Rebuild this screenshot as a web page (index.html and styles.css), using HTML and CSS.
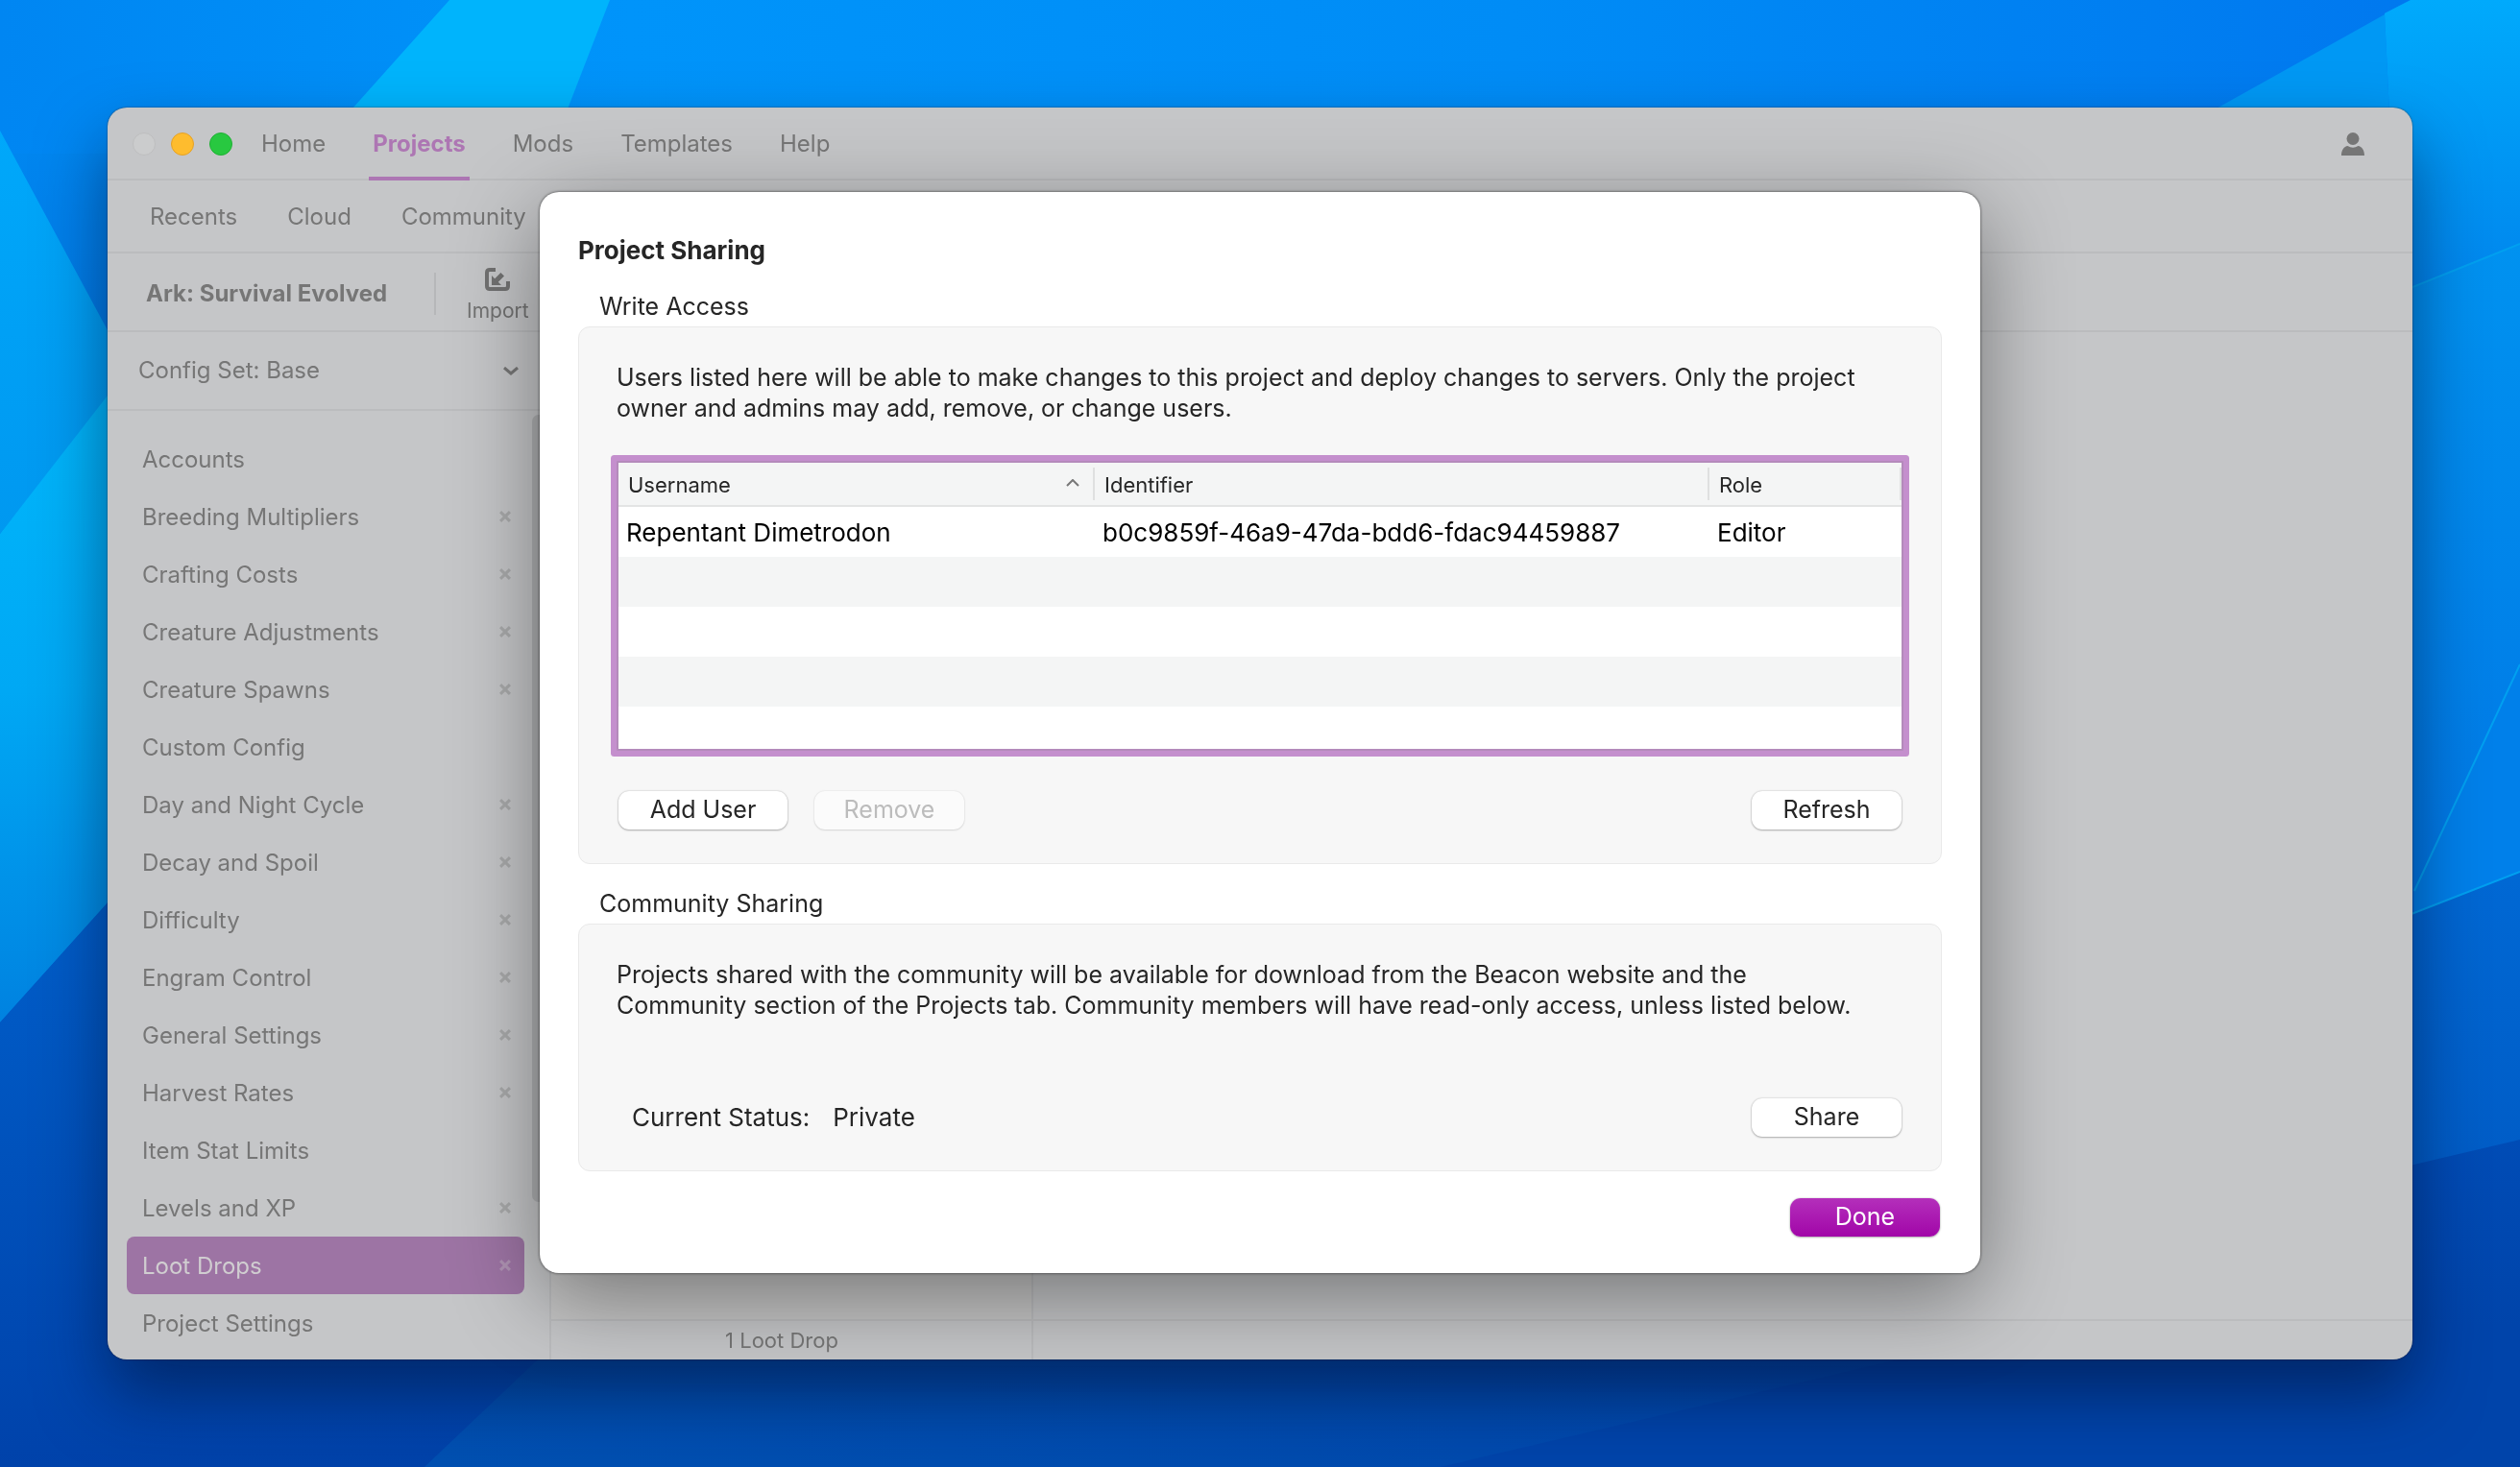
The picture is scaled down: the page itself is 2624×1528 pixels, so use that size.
FILE: index.html
```html
<!DOCTYPE html>
<html lang="en">
<head>
<meta charset="utf-8">
<title>Beacon</title>
<link rel="stylesheet" href="styles.css">
</head>
<body>
<svg class="wallpaper" viewBox="0 0 2624 1528" preserveAspectRatio="none" aria-hidden="true">
  <defs>
    <linearGradient id="sky" x1="0" y1="0" x2="0" y2="1"><stop offset="0" stop-color="#0090f8"/><stop offset=".25" stop-color="#0078e4"/><stop offset=".6" stop-color="#0068d4"/><stop offset=".8" stop-color="#005cc6"/><stop offset="1" stop-color="#0040a8"/></linearGradient>
    <linearGradient id="top" x1="0" y1="0" x2="1" y2="0"><stop offset="0" stop-color="#0086f2"/><stop offset=".25" stop-color="#0094fa"/><stop offset=".6" stop-color="#008cf6"/><stop offset="1" stop-color="#0076ee"/></linearGradient>
    <linearGradient id="cyan" x1="0" y1="0" x2="0" y2="1"><stop offset="0" stop-color="#00b8fc"/><stop offset=".5" stop-color="#00a8f4"/><stop offset="1" stop-color="#0082e0"/></linearGradient>
    <linearGradient id="left" x1="0" y1="0" x2="0" y2="1"><stop offset="0" stop-color="#00a8fa"/><stop offset="1" stop-color="#0098f0"/></linearGradient>
    <linearGradient id="deep" x1="0" y1="0" x2="0" y2="1"><stop offset="0" stop-color="#0060cc"/><stop offset="1" stop-color="#0042aa"/></linearGradient>
    <linearGradient id="right" x1="0" y1="0" x2="0" y2="1"><stop offset="0" stop-color="#00aafc"/><stop offset="1" stop-color="#0084ec"/></linearGradient>
    <linearGradient id="mid" x1="0" y1="0" x2="0" y2="1"><stop offset="0" stop-color="#0092f0"/><stop offset="1" stop-color="#0076e4"/></linearGradient>
    <linearGradient id="floor" x1="0" y1="0" x2="1" y2="0"><stop offset="0" stop-color="#0050b2"/><stop offset="1" stop-color="#0044aa"/></linearGradient>
    <linearGradient id="corner" x1="0" y1="0" x2="0" y2="1"><stop offset="0" stop-color="#004cb6"/><stop offset="1" stop-color="#0044aa"/></linearGradient>
  </defs>
  <rect width="2624" height="1528" fill="url(#sky)"/>
  <rect width="2624" height="160" fill="url(#top)"/>
  <polygon points="468,0 635,0 573,160 325,160" fill="#00b4fc"/>
  <polygon points="0,136 140,396 140,380 0,556" fill="url(#left)"/>
  <polygon points="0,556 140,376 140,909 0,1065" fill="url(#cyan)"/>
  <polygon points="0,1065 140,909 140,1380 600,1380 442,1528 0,1528" fill="url(#deep)"/>
  <polygon points="598,1380 442,1528 2624,1528 2624,1380" fill="url(#floor)"/>
  <polygon points="2624,1187 2480,1221 2480,1382 2624,1382" fill="url(#corner)"/>
  <polygon points="2130,1380 1500,1528 2624,1528 2624,1380" fill="#0044aa"/>
  <polygon points="2510,0 2224,160 2490,160 2483,14" fill="#0098f4"/>
  <polygon points="2510,0 2624,0 2624,254 2480,312 2490,160 2483,14" fill="url(#right)"/>
  <polygon points="2624,254 2480,312 2480,964 2624,908" fill="url(#mid)"/>
  <polygon points="2624,692 2514,928 2514,950 2624,908" fill="#0080ea"/>
  <path d="M2624 254L2480 312M2624 692L2514 928M2624 908L2480 964" fill="none" stroke="#00a0f0" stroke-width="2"/>
</svg>

<main class="desktop">
  <div class="window">
    <header class="titlebar">
      <div class="lights"><i class="light"></i><i class="light light-min"></i><i class="light light-max"></i></div>
      <nav class="tabs">
        <a href="#home">Home</a><a href="#projects" class="active">Projects</a><a href="#mods">Mods</a><a href="#templates">Templates</a><a href="#help">Help</a>
      </nav>
      <button class="account" aria-label="Account"><svg width="24" height="24" viewBox="0 0 24 24"><circle cx="12" cy="6.5" r="6.5"/><path d="M0 24C0 18 3 14.500 6.500 14Q12 17.500 17.500 14C21 14.500 24 18 24 24Z"/></svg></button>
    </header>
    <nav class="subtabs">
      <a href="#recents">Recents</a><a href="#cloud">Cloud</a><a href="#community">Community</a>
    </nav>
    <div class="toolbar">
      <h1>Ark: Survival Evolved</h1>
      <button class="import"><svg width="26" height="24" viewBox="0 0 26 24"><path d="M11 2H5Q2 2 2 5V19Q2 22 5 22H21Q24 22 24 19V14" fill="none" stroke="currentColor" stroke-width="4"/><path d="M7 8V18H17L13.800 14.800L20 8.600L16.400 5L10.200 11.200Z" fill="currentColor"/></svg><span>Import</span></button>
    </div>
    <div class="workspace">
      <aside class="sidebar">
        <button class="config"><span>Config Set: Base</span><svg width="16" height="9" viewBox="0 0 16 9"><path d="M1 1L8 7L15 1" fill="none" stroke="currentColor" stroke-width="3"/></svg></button>
        <ul class="editors">
          <li>Accounts</li>
          <li class="closable">Breeding Multipliers</li>
          <li class="closable">Crafting Costs</li>
          <li class="closable">Creature Adjustments</li>
          <li class="closable">Creature Spawns</li>
          <li>Custom Config</li>
          <li class="closable">Day and Night Cycle</li>
          <li class="closable">Decay and Spoil</li>
          <li class="closable">Difficulty</li>
          <li class="closable">Engram Control</li>
          <li class="closable">General Settings</li>
          <li class="closable">Harvest Rates</li>
          <li>Item Stat Limits</li>
          <li class="closable">Levels and XP</li>
          <li class="closable selected">Loot Drops</li>
          <li>Project Settings</li>
        </ul>
        <div class="scroll-thumb"></div>
      </aside>
      <section class="drops"><div class="pane"></div><footer>1 Loot Drop</footer></section>
      <section class="detail"><div class="pane"></div><footer></footer></section>
    </div>
  </div>

  <div class="sheet" role="dialog" aria-labelledby="sheet-title">
    <h2 id="sheet-title">Project Sharing</h2>
    <h3>Write Access</h3>
    <section class="group">
      <p>Users listed here will be able to make changes to this project and deploy changes to servers. Only the project owner and admins may add, remove, or change users.</p>
      <div class="list">
        <table>
          <thead><tr><th class="col-user"><span>Username<svg width="14" height="8" viewBox="0 0 14 8"><path d="M1 7L7 1L13 7" fill="none" stroke="currentColor" stroke-width="2"/></svg></span></th><th class="col-id"><span>Identifier</span></th><th><span>Role</span></th></tr></thead>
          <tbody><tr><td>Repentant Dimetrodon</td><td>b0c9859f-46a9-47da-bdd6-fdac94459887</td><td>Editor</td></tr></tbody>
        </table>
      </div>
      <div class="actions"><button class="btn btn-wide">Add User</button><button class="btn" disabled>Remove</button><button class="btn end">Refresh</button></div>
    </section>
    <h3>Community Sharing</h3>
    <section class="group">
      <p>Projects shared with the community will be available for download from the Beacon website and the Community section of the Projects tab. Community members will have read-only access, unless listed below.</p>
      <div class="actions status"><span>Current Status:</span><span>Private</span><button class="btn end">Share</button></div>
    </section>
    <div class="sheet-footer"><button class="btn btn-primary">Done</button></div>
  </div>
</main>
</body>
</html>
```

FILE: styles.css
```css
* { box-sizing: border-box; }

body {
  margin: 0;
  font: 25px/32px Inter, "Liberation Sans", sans-serif;
  color: #262626;
  background: #0060d0;
}

h1, h2, h3, p, ul { margin: 0; padding: 0; font-size: inherit; font-weight: inherit; }
a { color: inherit; text-decoration: none; }
button { font: inherit; color: inherit; background: none; border: 0; padding: 0; }
svg { display: block; }

.wallpaper { position: fixed; inset: 0; width: 100%; height: 100%; }

.desktop {
  position: relative;
  display: flex;
  min-height: 100vh;
  padding: 112px;
}

/* Application window */
.window {
  flex: 1;
  display: flex;
  flex-direction: column;
  overflow: hidden;
  border-radius: 20px;
  background: #c5c6c8;
  color: #767676;
  font-size: 24px;
  box-shadow: 0 0 2px rgba(0, 0, 0, .6), 0 36px 70px rgba(0, 10, 40, .5);
}

.titlebar, .subtabs, .toolbar, .config { border-bottom: 2px solid #bbbcbe; }

.titlebar { display: flex; height: 76px; padding: 0 50px 0 26px; }
.lights { display: flex; align-items: center; gap: 16px; padding-top: 2px; }
.light { width: 24px; height: 24px; border-radius: 50%; background: #cbcccd; border: 1px solid #bebebf; }
.light-min { background: #febc2e; border-color: #e5a125; }
.light-max { background: #28c840; border-color: #1fb034; }

.tabs { display: flex; gap: 41px; margin-left: 26px; }
.tabs a { padding: 0 4px; height: 76px; line-height: 76px; }
.tabs .active { color: #ad76b3; font-weight: 700; border-bottom: 4px solid #ad76b3; }
.account { margin-left: auto; padding-top: 2px; fill: #767676; }

.subtabs { display: flex; align-items: center; gap: 52px; height: 76px; padding: 2px 44px 0; }

.toolbar { display: flex; align-items: center; height: 82px; padding: 4px 0 0 40px; }
.toolbar h1 { width: 302px; line-height: 44px; font-weight: 700; border-right: 2px solid #b6b7b9; }
.import { display: flex; flex-direction: column; align-items: center; gap: 8px; margin-left: 32px; padding-top: 4px; font-size: 21px; line-height: 26px; color: #727272; }

.workspace { flex: 1; display: flex; min-height: 0; }

.sidebar {
  position: relative;
  display: flex;
  flex-direction: column;
  width: 462px;
  border-right: 2px solid #bbbcbe;
}
.config { display: flex; align-items: center; justify-content: space-between; height: 82px; flex: none; padding: 0 32px; }
.editors { flex: 1; list-style: none; padding: 20px 26px 0 20px; overflow: hidden; }
.editors li { display: flex; align-items: center; justify-content: space-between; height: 60px; padding: 2px 14px 0 16px; border-radius: 8px; }
.closable::after {
  content: "";
  width: 12px;
  height: 12px;
  margin-bottom: 2px;
  background: currentColor;
  opacity: .35;
  clip-path: polygon(0 18%, 18% 0, 50% 32%, 82% 0, 100% 18%, 68% 50%, 100% 82%, 82% 100%, 50% 68%, 18% 100%, 0 82%, 32% 50%);
}
.editors .selected { background: #9d74a4; color: #d0cdd0; }
.scroll-thumb { position: absolute; top: 86px; right: 4px; width: 14px; height: 820px; border-radius: 7px; background: #afb0b2; }

.drops, .detail { display: flex; flex-direction: column; }
.drops { width: 502px; border-right: 2px solid #bbbcbe; }
.detail { flex: 1; }
.pane { flex: 1; }
.drops .pane { background: #c6c6c6; }
.drops footer, .detail footer { height: 42px; border-top: 2px solid #bbbcbe; font-size: 22px; line-height: 40px; text-align: center; padding-right: 20px; }

/* Sharing sheet */
.sheet {
  position: absolute;
  top: 200px;
  left: 50%;
  width: 1500px;
  margin-left: -750px;
  padding: 40px 40px 38px;
  border-radius: 20px;
  background: #fff;
  box-shadow: 0 0 3px rgba(0, 0, 0, .7), 0 24px 90px rgba(0, 0, 0, .42);
}
.sheet h2 { height: 38px; line-height: 42px; font-size: 26px; font-weight: 700; }
.sheet h3 { padding: 25px 22px 5px; }
.group { display: flex; flex-direction: column; padding: 36px 39px 35px; border: 1px solid #e9e9e9; border-radius: 12px; background: #f7f7f7; }
.group p { padding-right: 40px; }

.list {
  margin-top: 39px;
  height: 302px;
  border: 2px solid #b48abb;
  box-shadow: 0 0 0 6px #c48fcd;
  border-radius: 1px;
  background: repeating-linear-gradient(#fff 0 52px, #f4f5f5 52px 104px) 0 46px, #fff;
}
.list table { width: 100%; border-collapse: separate; border-spacing: 0; table-layout: fixed; color: #000; }
.list th { height: 46px; padding: 0; font-size: 22px; font-weight: 400; text-align: left; color: #262626; background: #f4f5f5; border-bottom: 2px solid #e3e4e4; }
.list th span { display: flex; align-items: center; justify-content: space-between; height: 34px; padding: 2px 14px 0 10px; border-right: 2px solid #dfe0e0; }
.list th svg { margin-bottom: 4px; color: #777; }
.list td { height: 52px; padding: 2px 0 0 8px; font-size: 26px; }
.col-user { width: 496px; }
.col-id { width: 640px; }

.actions { display: flex; gap: 28px; margin-top: 42px; padding: 0 2px; align-items: center; }
.status { gap: 24px; margin-top: 81px; padding-left: 16px; font-size: 26px; }
.btn { width: 156px; height: 40px; line-height: 38px; padding-bottom: 2px; border-radius: 11px; font-size: 25px; background: #fff; box-shadow: 0 0 2px rgba(0, 0, 0, .25), 0 1px 2px rgba(0, 0, 0, .25); }
.btn-wide { width: 176px; }
.btn:disabled { color: #bcbcbc; background: #fbfbfb; box-shadow: 0 0 2px rgba(0, 0, 0, .12), 0 1px 2px rgba(0, 0, 0, .1); }
.end { margin-left: auto; }
.btn-primary { color: #fff; background: linear-gradient(#b42fbb, #a106a8); }
.sheet-footer { display: flex; justify-content: flex-end; padding: 28px 2px 0; }
```
